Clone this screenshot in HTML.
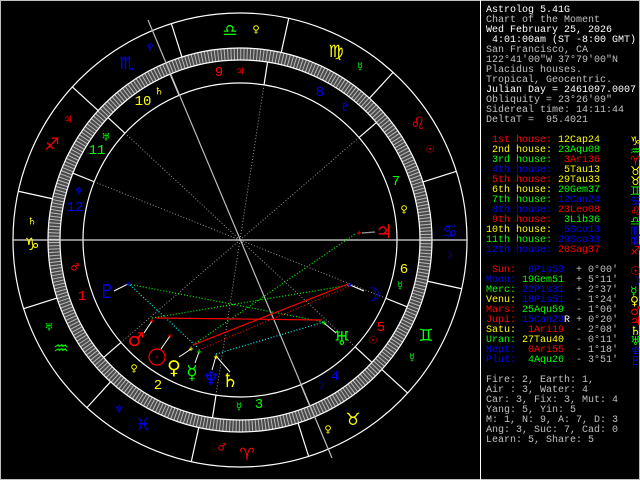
<!DOCTYPE html>
<html><head><meta charset="utf-8"><style>
html,body{margin:0;padding:0;background:#000;}
#w{position:relative;width:640px;height:480px;background:#000;overflow:hidden;}
svg{position:absolute;left:0;top:0;}
pre{position:absolute;left:486px;top:6px;margin:0;font-family:"Liberation Mono","DejaVu Sans Mono",monospace;font-size:10px;line-height:10px;color:#c0c0c0;}
.w{color:#fff}.r{color:#f00}.y{color:#ff0}.g{color:#0f0}.b{color:#00f}
.gl{font-family:"DejaVu Sans",sans-serif;font-size:12px;display:inline-block;height:10px;line-height:10px;vertical-align:top;overflow:visible;}
</style></head><body><div id="w">
<svg width="640" height="480" viewBox="0 0 640 480" font-family="DejaVu Sans, sans-serif">
<rect x="0.5" y="0.5" width="639" height="479" fill="none" stroke="#c0c0c0"/>
<line x1="480.5" y1="0" x2="480.5" y2="480" stroke="#fff"/>
<circle cx="240" cy="240" r="186" fill="none" stroke="#4a4a4a" stroke-width="12"/>
<circle cx="240" cy="240" r="186" fill="none" stroke="#b8b8b8" stroke-width="12" stroke-dasharray="1 2.246"/>
<g fill="none" stroke="#fff" stroke-width="1.2">
<circle cx="240" cy="240" r="227"/>
<circle cx="240" cy="240" r="192"/>
<circle cx="240" cy="240" r="180"/>
<circle cx="240" cy="240" r="157"/>
</g>
<g transform="translate(240,240)" stroke="#fff" stroke-width="1.2">
<line x1="192" y1="0" x2="227" y2="0" transform="rotate(-257.6)"/>
<line x1="192" y1="0" x2="227" y2="0" transform="rotate(-287.6)"/>
<line x1="192" y1="0" x2="227" y2="0" transform="rotate(-317.6)"/>
<line x1="192" y1="0" x2="227" y2="0" transform="rotate(-347.6)"/>
<line x1="192" y1="0" x2="227" y2="0" transform="rotate(-17.6)"/>
<line x1="192" y1="0" x2="227" y2="0" transform="rotate(-47.6)"/>
<line x1="192" y1="0" x2="227" y2="0" transform="rotate(-77.6)"/>
<line x1="192" y1="0" x2="227" y2="0" transform="rotate(-107.6)"/>
<line x1="192" y1="0" x2="227" y2="0" transform="rotate(-137.6)"/>
<line x1="192" y1="0" x2="227" y2="0" transform="rotate(-167.6)"/>
<line x1="192" y1="0" x2="227" y2="0" transform="rotate(-197.6)"/>
<line x1="192" y1="0" x2="227" y2="0" transform="rotate(-227.6)"/>
<line x1="157" y1="0" x2="180" y2="0" transform="rotate(-220.73)"/>
<line x1="157" y1="0" x2="180" y2="0" transform="rotate(-261.2)"/>
<line x1="157" y1="0" x2="180" y2="0" transform="rotate(-292.82)"/>
<line x1="157" y1="0" x2="180" y2="0" transform="rotate(-317.15)"/>
<line x1="157" y1="0" x2="180" y2="0" transform="rotate(-338.22)"/>
<line x1="157" y1="0" x2="180" y2="0" transform="rotate(-40.73)"/>
<line x1="157" y1="0" x2="180" y2="0" transform="rotate(-81.2)"/>
<line x1="157" y1="0" x2="180" y2="0" transform="rotate(-112.82)"/>
<line x1="157" y1="0" x2="180" y2="0" transform="rotate(-137.15)"/>
<line x1="157" y1="0" x2="180" y2="0" transform="rotate(-158.22)"/>
</g>
<g transform="translate(240,240)" stroke="#999" stroke-width="1" stroke-dasharray="1 2">
<line x1="0" y1="0" x2="157" y2="0" transform="rotate(-220.73)"/>
<line x1="0" y1="0" x2="157" y2="0" transform="rotate(-261.2)"/>
<line x1="0" y1="0" x2="157" y2="0" transform="rotate(-317.15)"/>
<line x1="0" y1="0" x2="157" y2="0" transform="rotate(-338.22)"/>
<line x1="0" y1="0" x2="157" y2="0" transform="rotate(-40.73)"/>
<line x1="0" y1="0" x2="157" y2="0" transform="rotate(-81.2)"/>
<line x1="0" y1="0" x2="157" y2="0" transform="rotate(-137.15)"/>
<line x1="0" y1="0" x2="157" y2="0" transform="rotate(-158.22)"/>
</g>
<line x1="13" y1="240" x2="467" y2="240" stroke="#ddd" stroke-width="1.2"/>
<line x1="148" y1="20" x2="332" y2="458" stroke="#bbb" stroke-width="1.2"/>
<g stroke-width="1.2" fill="none">
<line x1="128" y1="284" x2="324" y2="322" stroke="#0f0" stroke-dasharray="1 2"/>
<line x1="152" y1="318" x2="350" y2="285" stroke="#0f0" stroke-dasharray="1 2"/>
<line x1="193" y1="345" x2="355" y2="234" stroke="#0f0" stroke-dasharray="1 2"/>
<line x1="130" y1="285" x2="197" y2="347" stroke="#0ff" stroke-dasharray="1 2"/>
<line x1="216" y1="354" x2="324" y2="322" stroke="#0ff" stroke-dasharray="1 2"/>
<line x1="156" y1="318" x2="322" y2="320" stroke="#f00"/>
<line x1="193" y1="345" x2="348" y2="284" stroke="#f00"/>
<line x1="199" y1="350" x2="350" y2="286" stroke="#f00" stroke-dasharray="1 2"/>
<line x1="362" y1="233" x2="375" y2="232" stroke="#999"/>
</g>
<g stroke="#fff" stroke-width="1">
<line x1="128" y1="284" x2="114" y2="291"/>
<line x1="152" y1="321" x2="144" y2="333"/>
<line x1="170" y1="336" x2="161" y2="349"/>
<line x1="191" y1="349" x2="179" y2="357"/>
<line x1="199" y1="352" x2="195" y2="363"/>
<line x1="216" y1="356" x2="212" y2="370"/>
<line x1="216" y1="356" x2="230" y2="372"/>
<line x1="350" y1="285" x2="364" y2="291"/>
<line x1="324" y1="323" x2="336" y2="333"/>
</g>
<g font-size="7" font-weight="bold" text-anchor="middle" dominant-baseline="central">
<text x="128" y="284" fill="#00f">+</text>
<text x="152" y="321" fill="#f00">+</text>
<text x="170" y="336" fill="#f00">+</text>
<text x="191" y="349" fill="#ff0">+</text>
<text x="199" y="352" fill="#0f0">+</text>
<text x="216" y="357" fill="#ff0">+</text>
<text x="350" y="285" fill="#00f">+</text>
<text x="324" y="323" fill="#0f0">+</text>
<text x="359" y="233" fill="#f00">+</text>
</g>
<g font-size="17" text-anchor="middle" dominant-baseline="central">
<text x="230" y="31" fill="#0f0">♎</text>
<text x="127" y="64" fill="#00f">♏</text>
<text x="52" y="145" fill="#f00">♐</text>
<text x="32" y="245" fill="#ff0">♑</text>
<text x="61" y="349" fill="#0f0">♒</text>
<text x="143" y="425" fill="#00f">♓</text>
<text x="247" y="455" fill="#f00">♈</text>
<text x="353" y="420" fill="#ff0">♉</text>
<text x="426" y="336" fill="#0f0">♊</text>
<text x="450" y="232" fill="#00f">♋</text>
<text x="418" y="124" fill="#f00">♌</text>
<text x="336" y="52" fill="#ff0">♍</text>
</g>
<g font-size="10" text-anchor="middle" dominant-baseline="central">
<text x="256" y="30" fill="#ff0">♀</text>
<text x="150" y="48" fill="#00f">♆</text>
<text x="68" y="120" fill="#f00">♃</text>
<text x="32" y="222" fill="#ff0">♄</text>
<text x="49" y="328" fill="#0f0">♅</text>
<text x="119" y="410" fill="#00f">♆</text>
<text x="222" y="448" fill="#f00">♂</text>
<text x="328" y="430" fill="#ff0">♀</text>
<text x="412" y="358" fill="#0f0">☿</text>
<text x="448" y="256" fill="#00f">☽</text>
<text x="430" y="150" fill="#f00">☉</text>
<text x="360" y="67" fill="#0f0">☿</text>
<text x="159" y="92" fill="#ff0">♄</text>
<text x="106" y="138" fill="#0f0">♅</text>
<text x="79" y="192" fill="#00f">♆</text>
<text x="75" y="268" fill="#f00">♂</text>
<text x="134" y="369" fill="#ff0">♀</text>
<text x="239" y="407" fill="#0f0">☿</text>
<text x="320" y="386" fill="#00f">☽</text>
<text x="373" y="341" fill="#f00">☉</text>
<text x="400" y="286" fill="#0f0">☿</text>
<text x="404" y="210" fill="#ff0">♀</text>
<text x="345" y="108" fill="#00f">♇</text>
<text x="240" y="72" fill="#f00">♃</text>
</g>
<g font-family="Liberation Mono, monospace" font-size="14" text-anchor="middle" dominant-baseline="central">
<text x="143" y="102" fill="#ff0">10</text>
<text x="97" y="151" fill="#0f0">11</text>
<text x="75" y="208" fill="#00f">12</text>
<text x="82" y="297" fill="#f00">1</text>
<text x="158" y="386" fill="#ff0">2</text>
<text x="259" y="405" fill="#0f0">3</text>
<text x="335" y="377" fill="#00f">4</text>
<text x="381" y="328" fill="#f00">5</text>
<text x="404" y="270" fill="#ff0">6</text>
<text x="396" y="182" fill="#0f0">7</text>
<text x="320" y="93" fill="#00f">8</text>
<text x="219" y="73" fill="#f00">9</text>
</g>
<circle cx="157" cy="357" r="8" fill="none" stroke="#f00" stroke-width="1.2"/>
<circle cx="157" cy="357" r="0.8" fill="#f00"/>
<g font-size="19" text-anchor="middle" dominant-baseline="central">
<text x="136" y="340" fill="#f00">♂</text>
<text x="174" y="368" fill="#ff0">♀</text>
<text x="192" y="373" fill="#0f0">☿</text>
<text x="211" y="379" fill="#00f">♆</text>
<text x="230" y="381" fill="#ff0">♄</text>
<text x="107" y="292" fill="#00f">♇</text>
<text x="372" y="295" fill="#00f">☽</text>
<text x="342" y="339" fill="#0f0">♅</text>
<text x="384" y="232" fill="#f00">♃</text>
</g>
</svg>
<pre><span class="w">Astrolog 5.41G</span>
Chart of the Moment
<span class="w">Wed February 25, 2026</span>
<span class="w"> 4:01:00am (ST -8:00 GMT)</span>
San Francisco, CA
122°41'00"W 37°79'00"N
Placidus houses.
Tropical, Geocentric.
<span class="w">Julian Day = 2461097.0007</span>
Obliquity = 23°26'09"
Sidereal time: 14:11:44
DeltaT =  95.4021

<span class="r"> 1st house:</span> <span class="y">12Cap24</span>     <span class="y gl">♑</span>
<span class="y"> 2nd house:</span> <span class="g">23Aqu08</span>     <span class="g gl">♒</span>
<span class="g"> 3rd house:</span> <span class="r"> 3Ari36</span>     <span class="r gl">♈</span>
<span class="b"> 4th house:</span> <span class="y"> 5Tau13</span>     <span class="y gl">♉</span>
<span class="r"> 5th house:</span> <span class="y">29Tau33</span>     <span class="y gl">♉</span>
<span class="y"> 6th house:</span> <span class="g">20Gem37</span>     <span class="g gl">♊</span>
<span class="g"> 7th house:</span> <span class="b">12Can24</span>     <span class="b gl">♋</span>
<span class="b"> 8th house:</span> <span class="r">23Leo08</span>     <span class="r gl">♌</span>
<span class="r"> 9th house:</span> <span class="g"> 3Lib36</span>     <span class="g gl">♎</span>
<span class="y">10th house:</span> <span class="b"> 5Sco13</span>     <span class="b gl">♏</span>
<span class="g">11th house:</span> <span class="b">29Sco33</span>     <span class="b gl">♏</span>
<span class="b">12th house:</span> <span class="r">20Sag37</span>     <span class="r gl">♐</span>

<span class="r"> Sun:</span> <span class="b"> 6Pis53</span>  + 0°00'  <span class="r gl">☉</span>
<span class="b">Moon:</span> <span class="g">19Gem51</span>  + 5°11'  <span class="b gl">☽</span>
<span class="g">Merc:</span> <span class="b">22Pis31</span>  + 2°37'  <span class="g gl">☿</span>
<span class="y">Venu:</span> <span class="b">18Pis51</span>  - 1°24'  <span class="y gl">♀</span>
<span class="r">Mars:</span> <span class="g">25Aqu59</span>  - 1°06'  <span class="r gl">♂</span>
<span class="r">Jupi:</span> <span class="b">15Can23</span><span class="w">R</span> + 0°20'  <span class="r gl">♃</span>
<span class="y">Satu:</span> <span class="r"> 1Ari19</span>  - 2°08'  <span class="y gl">♄</span>
<span class="g">Uran:</span> <span class="y">27Tau40</span>  - 0°11'  <span class="g gl">♅</span>
<span class="b">Nept:</span> <span class="r"> 0Ari55</span>  - 1°18'  <span class="b gl">♆</span>
<span class="b">Plut:</span> <span class="g"> 4Aqu26</span>  - 3°51'  <span class="b gl">♇</span>

Fire: 2, Earth: 1,
Air : 3, Water: 4
Car: 3, Fix: 3, Mut: 4
Yang: 5, Yin: 5
M: 1, N: 9, A: 7, D: 3
Ang: 3, Suc: 7, Cad: 0
Learn: 5, Share: 5</pre>
</div></body></html>
